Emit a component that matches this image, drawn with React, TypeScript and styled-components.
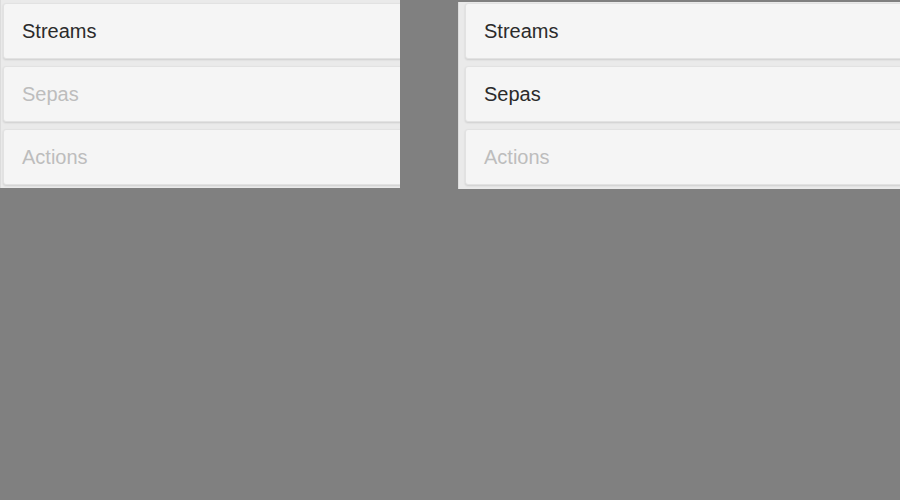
import styled, { createGlobalStyle } from "styled-components";

const GlobalStyle = createGlobalStyle`
    html, body {
        margin: 0;
        padding: 0;
        background-color: #808080;
        font-family: "Liberation Sans", Arial, sans-serif;
    }
`;

const Page = styled.main`
    width: 900px;
    height: 500px;
    display: flex;
    align-items: flex-start;
    gap: 58px;
    overflow: hidden;
`;

const Panel = styled.section<{ $width: number; $top: number; $left: number }>`
    width: ${props => props.$width}px;
    margin-top: ${props => props.$top}px;
    padding: ${props => 3 - props.$top}px 0 ${props => 3 + props.$top / 2}px ${props => props.$left}px;
    box-sizing: border-box;
    background-color: #eaeaea;
    border-left: 1px solid #dcdcdc;
    display: flex;
    flex-direction: column;
    gap: 7px;
    overflow: hidden;
`;

const Item = styled.div<{ $disabled?: boolean }>`
    width: calc(100% + 20px);
    height: 56px;
    box-sizing: border-box;
    flex-shrink: 0;
    display: flex;
    align-items: center;
    padding-left: 18px;
    background-color: #f5f5f5;
    border: 1px solid #e2e2e2;
    border-radius: 3px;
    box-shadow: 0 1px 2px rgba(0, 0, 0, 0.12);
    font-size: 20px;
    color: ${props => (props.$disabled ? "#bdbdbd" : "#2b2b2b")};
`;

const Label = styled.span`
    padding-top: 1px;
`;

type Entry = { name: string; disabled?: boolean };

function Menu({ entries, width, top, left }: { entries: Entry[]; width: number; top: number; left: number }) {
    return (
        <Panel $width={width} $top={top} $left={left}>
            {entries.map(e => (
                <Item key={e.name} $disabled={e.disabled}>
                    <Label>{e.name}</Label>
                </Item>
            ))}
        </Panel>
    );
}

export default function App() {
    return (
        <>
            <GlobalStyle />
            <Page>
                <Menu
                    width={400}
                    top={0}
                    left={2}
                    entries={[
                        { name: "Streams" },
                        { name: "Sepas", disabled: true },
                        { name: "Actions", disabled: true },
                    ]}
                />
                <Menu
                    width={442}
                    top={2}
                    left={6}
                    entries={[
                        { name: "Streams" },
                        { name: "Sepas" },
                        { name: "Actions", disabled: true },
                    ]}
                />
            </Page>
        </>
    );
}
